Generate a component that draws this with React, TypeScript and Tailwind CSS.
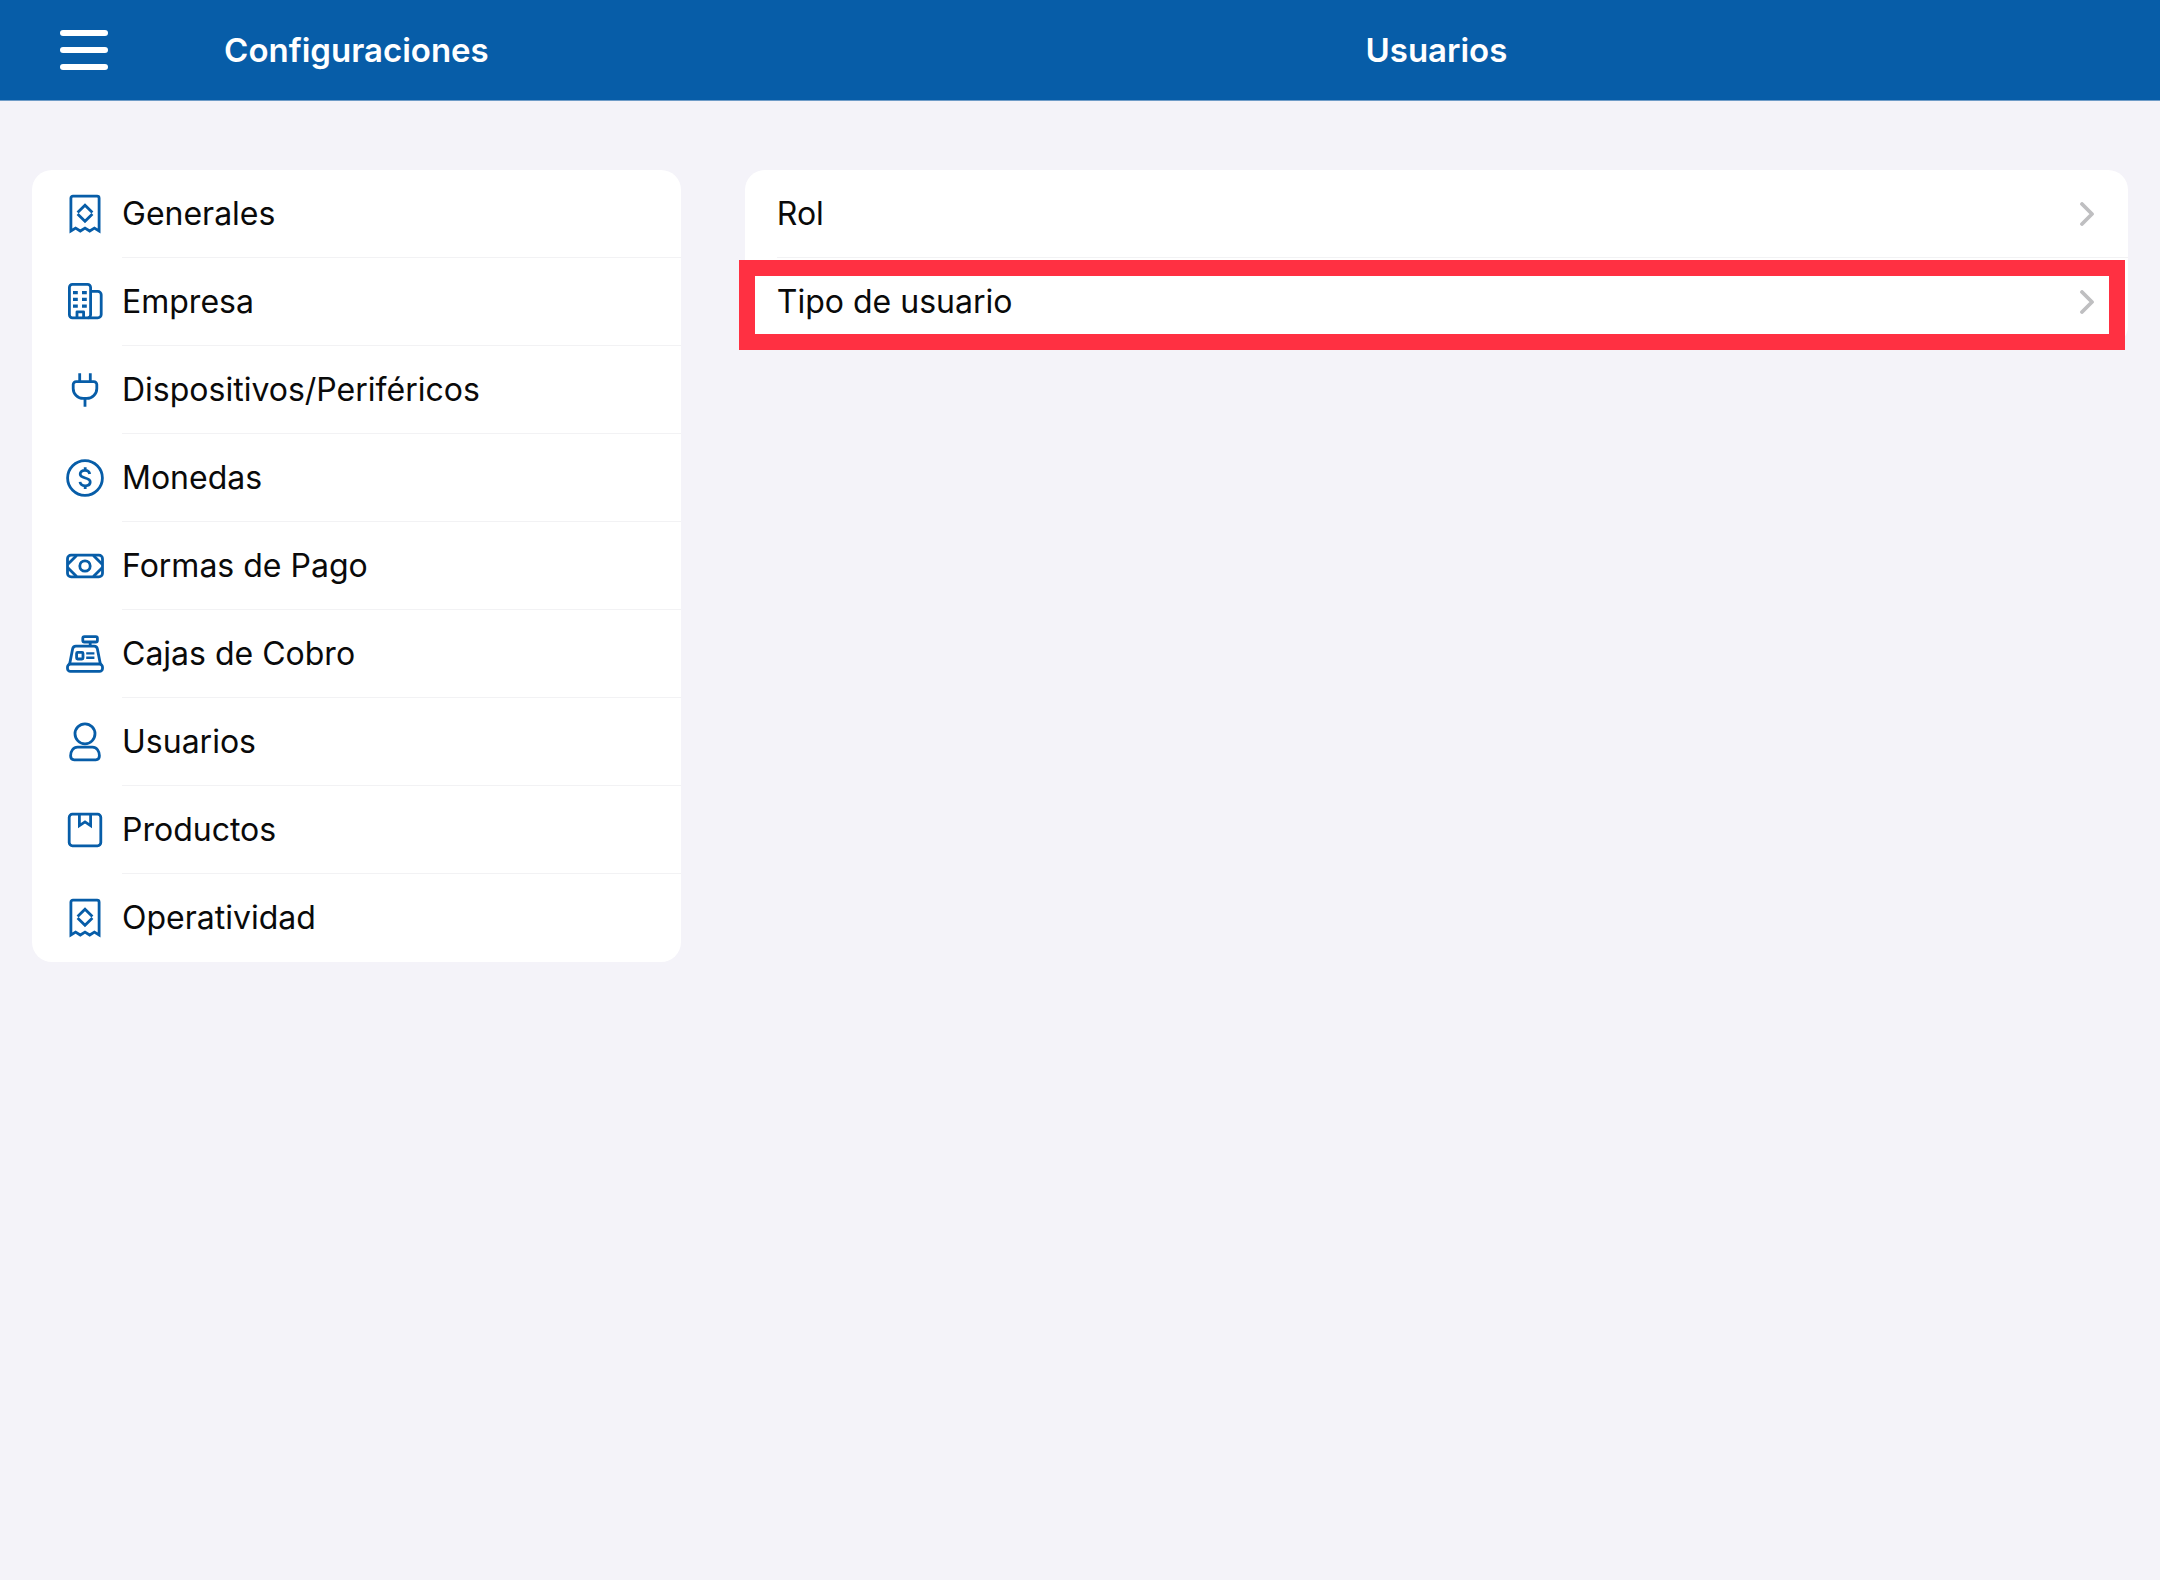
import type { ReactNode } from 'react';

interface MenuItem {
  id: string;
  label: string;
  icon: ReactNode;
}

interface Option {
  id: string;
  label: string;
  highlighted: boolean;
}

function Icon({ children }: { children: ReactNode }) {
  return (
    <svg
      viewBox="0 0 40 40"
      className="size-10 shrink-0 text-[#075da8]"
      fill="none"
      stroke="currentColor"
      strokeWidth="2.8"
      strokeLinejoin="round"
      aria-hidden="true"
    >
      {children}
    </svg>
  );
}

const receiptIcon = (
  <Icon>
    <path d="M5.9 37V4.2a2 2 0 0 1 2-2h24.2a2 2 0 0 1 2 2V37l-4.7-2.9-4.7 2.9-4.7-2.9-4.7 2.9-4.7-2.9z" strokeLinejoin="miter" />
    <path d="M12.6 18.4 20 11.2l7.4 7.2M12.6 20.1l7.4 7.1 7.4-7.1" strokeLinejoin="miter" />
  </Icon>
);

const buildingIcon = (
  <Icon>
    <rect x="4.4" y="2.4" width="21.2" height="33.4" rx="3" />
    <path d="M25.6 9.4h7.2a3.4 3.4 0 0 1 3.4 3.4v19.6a3.4 3.4 0 0 1-3.4 3.4h-10" />
    <path d="M12 35.8v-6h6.6v6" />
    <path d="M8 10.7h4.8M17 10.7h4.8M8 17.4h4.8M17 17.4h4.8M8 24.2h4.8M17 24.2h4.8" strokeWidth="3.2" />
  </Icon>
);

const plugIcon = (
  <Icon>
    <path d="M14.7 3.2v8.4M25.3 3.2v8.4M20 28.4v8.4" />
    <path d="M11.2 11.6h17.6a3 3 0 0 1 3 3v3.8a10 10 0 0 1-10 10h-3.6a10 10 0 0 1-10-10v-3.8a3 3 0 0 1 3-3z" />
  </Icon>
);

const coinIcon = (
  <Icon>
    <circle cx="20" cy="20" r="17.4" />
    <path d="M24.8 16c-.5-2.4-2.2-3.6-4.8-3.6-2.9 0-4.8 1.4-4.8 3.7 0 2.2 1.8 3.1 5 3.9 3.3.8 5 1.8 5 4 0 2.3-2 3.8-5 3.8-2.9 0-4.8-1.4-5.2-3.9M20.2 9.2v3.2M20.2 27.8V31" />
  </Icon>
);

const cashIcon = (
  <Icon>
    <rect x="2.5" y="9.2" width="35" height="21.6" rx="3.6" />
    <circle cx="20" cy="20" r="5.2" />
    <path d="M11.6 9.4 2.8 18.2M11.6 30.6l-8.8-8.8M28.4 9.4l8.8 8.8M28.4 30.6l8.8-8.8" />
  </Icon>
);

const registerIcon = (
  <Icon>
    <rect x="17.8" y="2.6" width="14.6" height="5.4" rx="1.6" />
    <path d="M25.2 8v4.2" />
    <path d="M4.6 30.2 7.6 15a3.4 3.4 0 0 1 3.3-2.8h18.2a3.4 3.4 0 0 1 3.3 2.8l3 15.2" />
    <rect x="2.5" y="30" width="35" height="7.4" rx="3" />
    <rect x="11.6" y="18.4" width="6.4" height="6.6" rx="1" />
    <path d="M21.2 19.4h8.2M21.2 23.8h8.2" strokeWidth="2.4" />
  </Icon>
);

const userIcon = (
  <Icon>
    <circle cx="20" cy="11.8" r="10" />
    <path d="M12.6 25.2h14.8c4.4 0 7 4 7 8.6 0 2.6-1.2 4-3.6 4H9.2c-2.4 0-3.6-1.4-3.6-4 0-4.6 2.6-8.6 7-8.6z" />
  </Icon>
);

const productIcon = (
  <Icon>
    <rect x="4.2" y="4.2" width="31.6" height="31.6" rx="3.2" />
    <path d="M14.4 4.4v11.2l5.6-3.7 5.6 3.7V4.4" strokeLinejoin="miter" />
  </Icon>
);

const menuItems: MenuItem[] = [
  { id: 'generales', label: 'Generales', icon: receiptIcon },
  { id: 'empresa', label: 'Empresa', icon: buildingIcon },
  { id: 'dispositivos', label: 'Dispositivos/Periféricos', icon: plugIcon },
  { id: 'monedas', label: 'Monedas', icon: coinIcon },
  { id: 'formas-pago', label: 'Formas de Pago', icon: cashIcon },
  { id: 'cajas', label: 'Cajas de Cobro', icon: registerIcon },
  { id: 'usuarios', label: 'Usuarios', icon: userIcon },
  { id: 'productos', label: 'Productos', icon: productIcon },
  { id: 'operatividad', label: 'Operatividad', icon: receiptIcon },
];

const options: Option[] = [
  { id: 'rol', label: 'Rol', highlighted: false },
  { id: 'tipo-usuario', label: 'Tipo de usuario', highlighted: true },
];

export default function App() {
  return (
    <div className="min-h-screen bg-[#f4f3f9] font-['Inter',sans-serif] text-[#0a0a0a]">
      <header className="grid h-[101px] grid-cols-[33%_1fr] items-center border-b border-[#6f9cc8] bg-[#075da8] text-white">
        <div className="relative flex items-center justify-center">
          <button type="button" aria-label="Menú" className="absolute left-15 flex w-12 flex-col gap-[11px]">
            <span className="h-1.5 rounded-full bg-white" />
            <span className="h-1.5 rounded-full bg-white" />
            <span className="h-1.5 rounded-full bg-white" />
          </button>
          <h1 className="text-[33px] leading-10 font-semibold">Configuraciones</h1>
        </div>
        <h2 className="text-center text-[33px] leading-10 font-semibold">Usuarios</h2>
      </header>

      <div className="grid grid-cols-[33%_1fr] items-start pt-[69px]">
        <nav className="px-8">
          <ul className="overflow-hidden rounded-[20px] bg-white">
            {menuItems.map((item) => (
              <li key={item.id} className="group">
                <button type="button" className="flex h-22 w-full items-center gap-[17px] pl-[33px] text-left">
                  {item.icon}
                  <span className="flex h-full grow items-center border-y border-t-transparent border-b-[#f2f2f4] text-[32px] leading-10 group-last:border-b-transparent">
                    {item.label}
                  </span>
                </button>
              </li>
            ))}
          </ul>
        </nav>

        <main className="px-8">
          <ul className="rounded-[20px] bg-white">
            {options.map((option) => (
              <li key={option.id} className="group relative">
                <button type="button" className="flex h-22 w-full items-center pl-8 text-left">
                  <span className="flex h-full grow items-center justify-between border-y border-t-transparent border-b-[#f2f2f4] pr-[33px] text-[32px] leading-10 group-last:border-b-transparent">
                    {option.label}
                    <svg
                      viewBox="0 0 16 24"
                      className="h-6 w-4"
                      fill="none"
                      stroke="#bfbfc1"
                      strokeWidth="3.8"
                      strokeLinecap="round"
                      strokeLinejoin="round"
                      aria-hidden="true"
                    >
                      <path d="m3 2 10 10L3 22" />
                    </svg>
                  </span>
                </button>
                {option.highlighted && (
                  <div className="pointer-events-none absolute top-0.5 right-[3px] -bottom-1 -left-1.5 border-16 border-[#ff3042]" />
                )}
              </li>
            ))}
          </ul>
        </main>
      </div>
    </div>
  );
}
